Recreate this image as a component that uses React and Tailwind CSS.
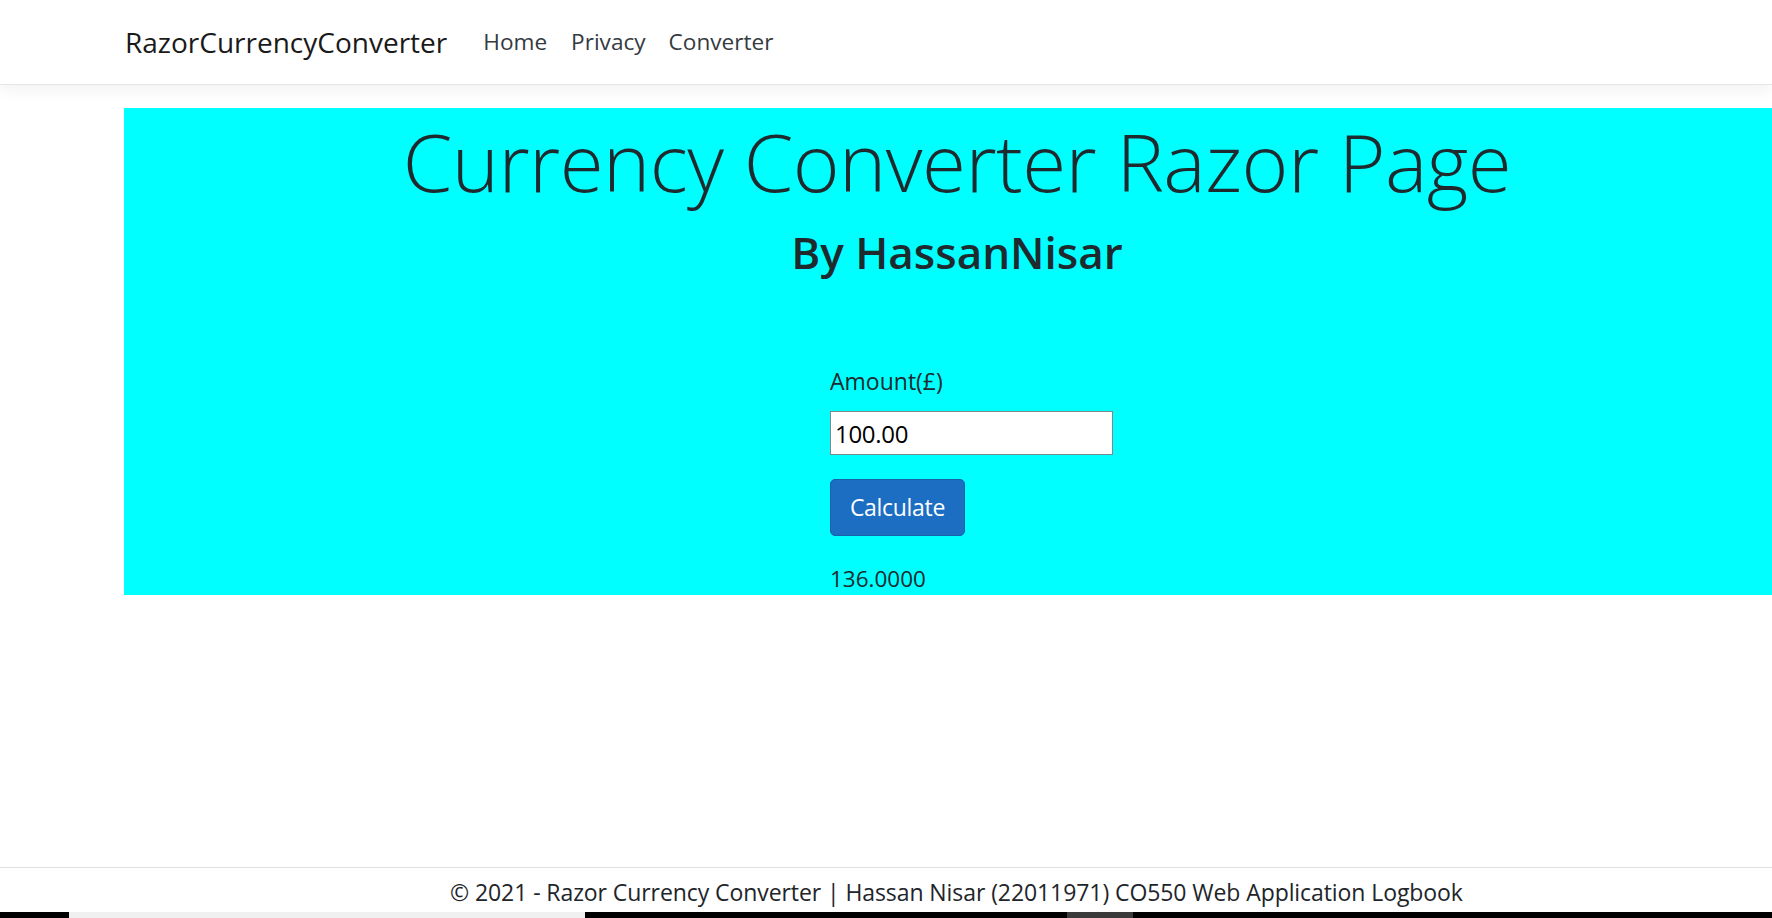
import React, { useState } from "react";

const font = { fontFamily: '"Open Sans", "Noto Sans", sans-serif' };

const Navbar = () => {
  return (
    <nav className="h-[85px] shrink-0 bg-white border-b border-[#e5e5e5] shadow-[0_6px_14px_rgba(0,0,0,0.05)] flex items-center pl-[125px] relative z-10">
      <a href="#" className="text-[28px] text-[#1a1a1a] mr-[36px]">
        RazorCurrencyConverter
      </a>
      <ul className="flex items-center">
        <li className="list-none mr-[24px]">
          <a href="#" className="text-[22.6px] text-[#343a40]">
            Home
          </a>
        </li>
        <li className="list-none mr-[23px]">
          <a href="#" className="text-[22.6px] text-[#343a40]">
            Privacy
          </a>
        </li>
        <li className="list-none">
          <a href="#" className="text-[22.6px] text-[#343a40]">
            Converter
          </a>
        </li>
      </ul>
    </nav>
  );
};

const Converter = () => {
  const [amount, setAmount] = useState("100.00");
  const [result, setResult] = useState("136.0000");

  const handleCalculate = (e) => {
    e.preventDefault();
    const value = parseFloat(amount) || 0;
    setResult((value * 1.36).toFixed(4));
  };

  return (
    <div className="w-[1666px] ml-[124px] mt-[23px] bg-[#00ffff] text-[#1e2a2e] pb-[1px]">
      <h1 className="text-center text-[80px] leading-[96px] font-light tracking-[-0.55px] pt-[5px]">
        Currency Converter Razor Page
      </h1>
      <h2 className="text-center text-[44px] leading-[50px] font-semibold mt-[18px]">
        By HassanNisar
      </h2>
      <form onSubmit={handleCalculate} className="pl-[706px] mt-[89px] flex flex-col items-start">
        <label className="text-[23px] leading-[30px]">Amount(£)</label>
        <input
          value={amount}
          onChange={(e) => setAmount(e.target.value)}
          className="mt-[15px] w-[283px] h-[44px] bg-white border border-[#7a8a8f] px-[4px] text-[24px] tracking-[-0.3px] text-black outline-none"
        />
        <button
          type="submit"
          className="mt-[24px] w-[135px] h-[57px] rounded-[5px] bg-[#1b6ec2] border border-[#1861ac] text-white text-[23px] tracking-[-0.3px]"
        >
          Calculate
        </button>
        <p className="mt-[28px] text-[22.5px] leading-[30px]">{result}</p>
      </form>
    </div>
  );
};

const Footer = () => {
  return (
    <footer className="h-[45px] shrink-0 border-t border-[#dee2e6] bg-white pl-[450px] pt-[9px]">
      <p className="text-[23px] leading-[30px] tracking-[-0.08px] text-[#212529] whitespace-nowrap">
        © 2021 - Razor Currency Converter | Hassan Nisar (22011971) CO550 Web Application Logbook
      </p>
    </footer>
  );
};

const App = () => {
  return (
    <div style={font} className="h-[918px] w-full overflow-hidden flex flex-col bg-white">
      <Navbar />
      <main className="flex-1 overflow-hidden">
        <Converter />
      </main>
      <Footer />
      <div className="h-[6px] shrink-0 bg-black flex">
        <div className="ml-[69px] w-[516px] bg-[#f0f0f0]"></div>
        <div className="ml-[482px] w-[66px] bg-[#3a3a3a]"></div>
      </div>
    </div>
  );
};

export default App;
